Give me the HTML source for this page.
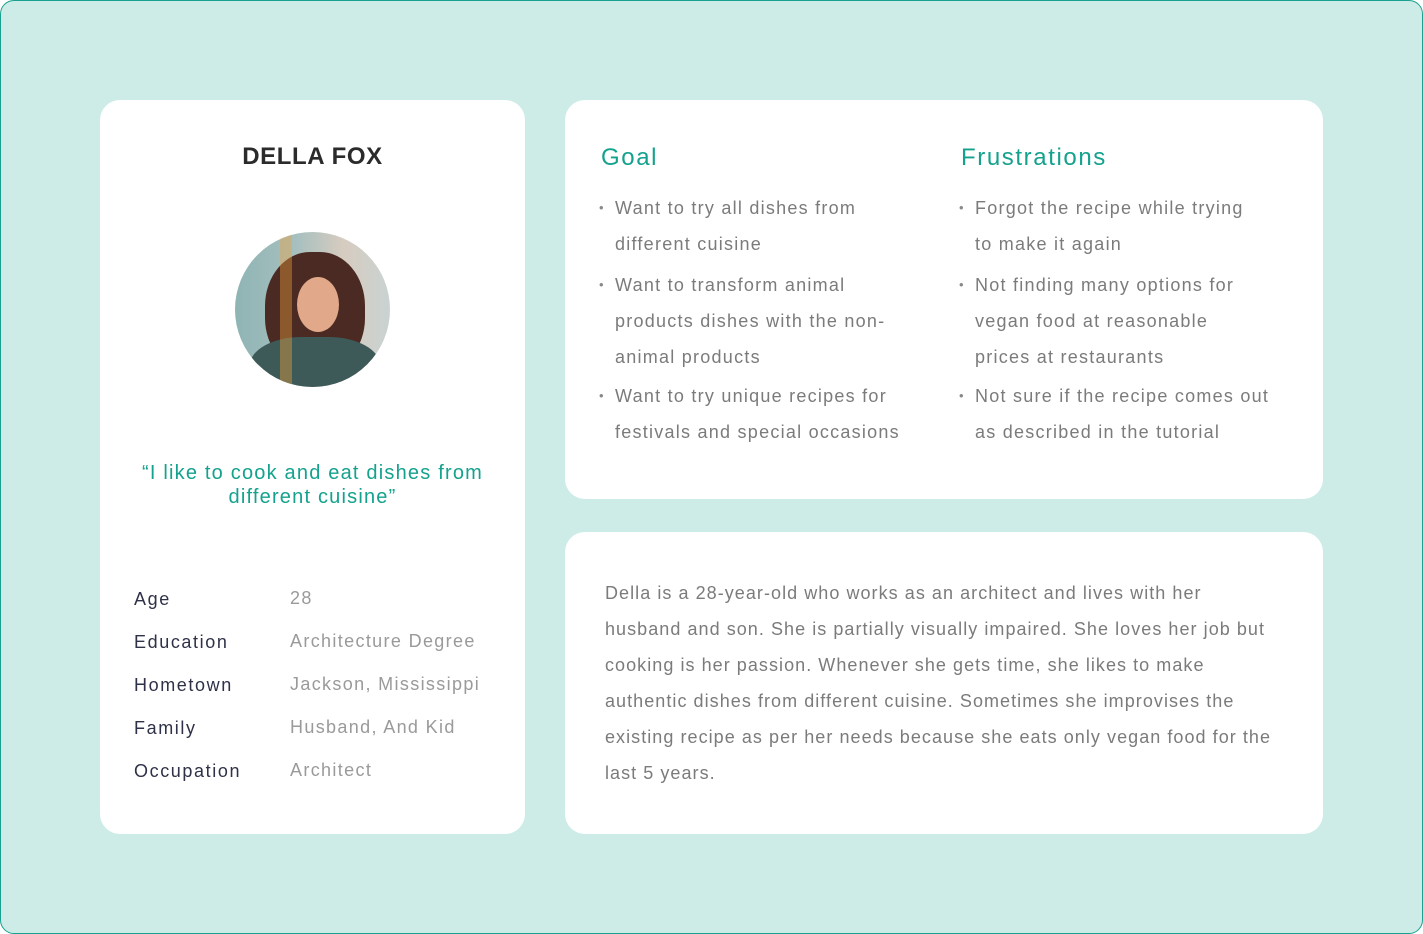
<!DOCTYPE html>
<html><head><meta charset="utf-8"><style>
*{margin:0;padding:0;box-sizing:border-box}
body{width:1423px;height:934px;background:#fff;font-family:"Liberation Sans",sans-serif;position:relative;overflow:hidden}
.bg{position:absolute;left:0;top:0;width:1423px;height:934px;background:#cdece8;border:1.5px solid #1aa08f;border-radius:14px}
.card{position:absolute;background:#fff;border-radius:20px}
.abs{position:absolute;white-space:nowrap}
.h{color:#14a28e;font-size:24px;letter-spacing:1.6px}
ul{list-style:none}
li{position:absolute;color:#7b7b7b;font-size:18px;line-height:36px;white-space:nowrap;letter-spacing:1.25px}
li:before{content:"•";position:absolute;left:-16px;font-size:13px;color:#888}
.lbl{color:#2e3147;font-size:18px;letter-spacing:1.6px}
.val{color:#9a9a9a;font-size:18px;letter-spacing:1.35px}
</style></head><body>
<div class="bg"></div>
<div class="card" style="left:100px;top:100px;width:425px;height:734px"></div>
<div class="card" style="left:565px;top:100px;width:758px;height:399px"></div>
<div class="card" style="left:565px;top:532px;width:758px;height:302px"></div>

<div class="abs" style="left:100px;width:425px;text-align:center;top:143px;font-size:24px;font-weight:bold;color:#2b2b2b;letter-spacing:0.6px">DELLA FOX</div>
<div class="abs" style="left:235px;top:232px;width:155px;height:155px;border-radius:50%;overflow:hidden;background:linear-gradient(90deg,#8fb4b4 0%,#a7c0bf 40%,#d7ccc0 70%,#c9d3d2 100%)">
<div style="position:absolute;left:30px;top:20px;width:100px;height:120px;border-radius:45%;background:#4a2a22"></div>
<div style="position:absolute;left:62px;top:45px;width:42px;height:55px;border-radius:50%;background:#e2a88a"></div>
<div style="position:absolute;left:15px;top:105px;width:130px;height:70px;border-radius:40% 40% 0 0;background:#3e5a58"></div>
<div style="position:absolute;left:45px;top:0;width:12px;height:155px;background:rgba(240,160,60,.4)"></div>
</div>
<div class="abs" style="left:100px;width:425px;text-align:center;top:461px;font-size:20px;line-height:24px;color:#14a28e;white-space:normal;letter-spacing:1.2px">“I like to cook and eat dishes from<br>different cuisine”</div>

<div class="abs lbl" style="left:134px;top:589px">Age</div><div class="abs val" style="left:290px;top:588px">28</div>
<div class="abs lbl" style="left:134px;top:632px">Education</div><div class="abs val" style="left:290px;top:631px">Architecture Degree</div>
<div class="abs lbl" style="left:134px;top:675px">Hometown</div><div class="abs val" style="left:290px;top:674px">Jackson, Mississippi</div>
<div class="abs lbl" style="left:134px;top:718px">Family</div><div class="abs val" style="left:290px;top:717px">Husband, And Kid</div>
<div class="abs lbl" style="left:134px;top:761px">Occupation</div><div class="abs val" style="left:290px;top:760px">Architect</div>

<div class="abs h" style="left:601px;top:144px">Goal</div>
<div class="abs h" style="left:961px;top:144px">Frustrations</div>
<ul>
<li style="left:615px;top:190px">Want to try all dishes from<br>different cuisine</li>
<li style="left:615px;top:267px">Want to transform animal<br>products dishes with the non-<br>animal products</li>
<li style="left:615px;top:378px">Want to try unique recipes for<br>festivals and special occasions</li>
<li style="left:975px;top:190px">Forgot the recipe while trying<br>to make it again</li>
<li style="left:975px;top:267px">Not finding many options for<br>vegan food at reasonable<br>prices at restaurants</li>
<li style="left:975px;top:378px">Not sure if the recipe comes out<br>as described in the tutorial</li>
</ul>
<div class="abs" style="left:605px;top:575px;color:#7b7b7b;font-size:18px;line-height:36px;letter-spacing:1.05px">Della is a 28-year-old who works as an architect and lives with her<br>husband and son. She is partially visually impaired. She loves her job but<br>cooking is her passion. Whenever she gets time, she likes to make<br>authentic dishes from different cuisine. Sometimes she improvises the<br>existing recipe as per her needs because she eats only vegan food for the<br>last 5 years.</div>
</body></html>
